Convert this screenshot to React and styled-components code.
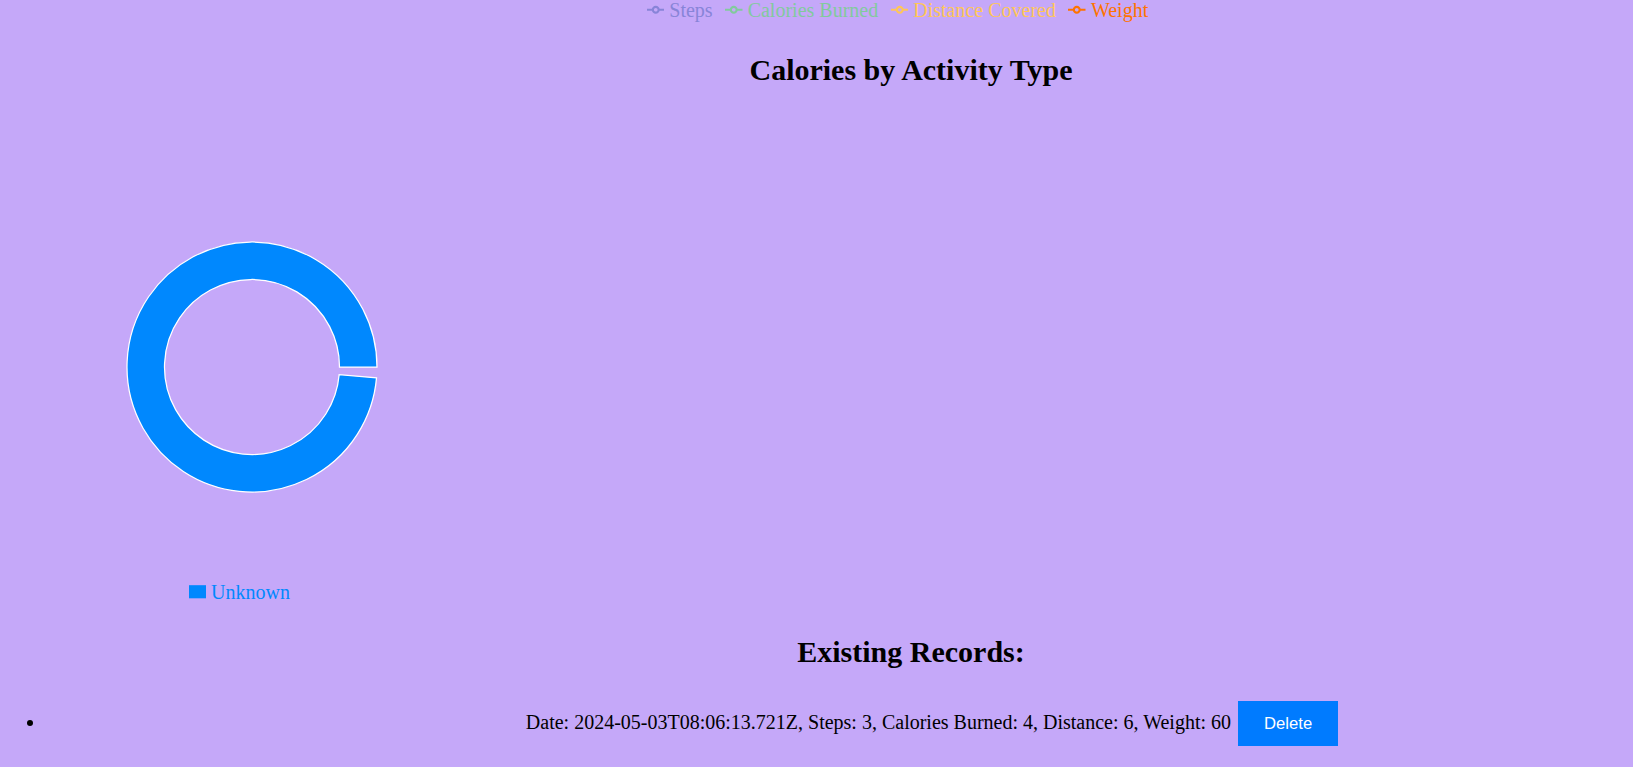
import React from "react";
import styled, { createGlobalStyle } from "styled-components";

const GlobalStyle = createGlobalStyle`
  html {
    overflow: hidden;
  }
  body {
    margin: 0 10px;
    background: #c5a8f9;
    font-family: "Liberation Serif", "Times New Roman", serif;
    color: #000;
  }
`;

const Page = styled.div`
  width: 1802px;
  text-align: center;
`;

const LegendList = styled.ul`
  display: flex;
  justify-content: center;
  margin: 0;
  padding: 0 ${(p) => p.$shift || 0}px 0 0;
  list-style: none;
  font-size: 20px;
  line-height: 20px;
`;

const LegendItem = styled.li`
  display: flex;
  align-items: center;
  margin-right: 12.5px;
  color: ${(p) => p.$color};
`;

const LegendIcon = styled.svg`
  width: 17.5px;
  height: 17.5px;
  margin-right: 5px;
  flex: none;
`;

const Heading = styled.h2`
  margin: ${(p) => p.$top}px 0 0;
  font-size: 30px;
  line-height: 34px;
  font-weight: bold;
`;

const ChartBox = styled.div`
  width: 484px;
  display: flex;
  flex-direction: column;
  align-items: center;
`;

const PieSvg = styled.svg`
  display: block;
  width: 484px;
  height: 480px;
`;

const PieLegend = styled(LegendList)`
  margin-top: 15px;
  padding-right: 13px;
`;

const RecordList = styled.ul`
  margin: 32px -6px 0 0;
  padding-left: 36px;
  font-size: 20px;
`;

const Record = styled.li`
  list-style: disc;
`;

const DeleteButton = styled.button`
  height: 45px;
  margin-left: 2px;
  padding: 0 26px;
  border: none;
  background: #007bff;
  color: #fff;
  font-family: "Liberation Sans", Arial, sans-serif;
  font-size: 16.67px;
  line-height: 45px;
  vertical-align: baseline;
  cursor: pointer;
`;

const lineSeries = [
  { name: "Steps", color: "#8884d8" },
  { name: "Calories Burned", color: "#82ca9d" },
  { name: "Distance Covered", color: "#ffc658" },
  { name: "Weight", color: "#ff7300" },
];

function LineIcon({ color }) {
  return (
    <LegendIcon viewBox="0 0 32 32">
      <path
        strokeWidth="4"
        fill="none"
        stroke={color}
        d="M0,16h10.67A5.33,5.33,0,1,1,21.33,16H32M21.33,16A5.33,5.33,0,1,1,10.67,16"
      />
    </LegendIcon>
  );
}

function donutPath(cx, cy, outer, inner, start, end) {
  const rad = (a) => (a * Math.PI) / 180;
  const pt = (r, a) => [cx + r * Math.cos(rad(a)), cy - r * Math.sin(rad(a))];
  const [x1, y1] = pt(outer, start);
  const [x2, y2] = pt(outer, end);
  const [x3, y3] = pt(inner, end);
  const [x4, y4] = pt(inner, start);
  const large = end - start > 180 ? 1 : 0;
  return `M${x1},${y1} A${outer},${outer},0,${large},0,${x2},${y2} L${x3},${y3} A${inner},${inner},0,${large},1,${x4},${y4} Z`;
}

const records = [
  {
    date: "2024-05-03T08:06:13.721Z",
    steps: 3,
    calories: 4,
    distance: 6,
    weight: 60,
  },
];

export default function App() {
  return (
    <>
      <GlobalStyle />
      <Page>
        <LegendList $shift={14.5}>
          {lineSeries.map((s) => (
            <LegendItem key={s.name} $color={s.color}>
              <LineIcon color={s.color} />
              {s.name}
            </LegendItem>
          ))}
        </LegendList>

        <Heading $top={33}>Calories by Activity Type</Heading>

        <ChartBox>
          <PieSvg viewBox="0 0 484 480">
            <path
              d={donutPath(242, 280, 125, 87.5, 0, 355)}
              fill="#0088FE"
              stroke="#fff"
              strokeWidth="1.25"
            />
          </PieSvg>
          <PieLegend>
            <LegendItem $color="#0088FE">
              <LegendIcon viewBox="0 0 32 32">
                <path fill="#0088FE" d="M0,4h32v24h-32z" />
              </LegendIcon>
              Unknown
            </LegendItem>
          </PieLegend>
        </ChartBox>

        <Heading $top={33}>Existing Records:</Heading>

        <RecordList>
          {records.map((r) => (
            <Record key={r.date}>
              Date: {r.date}, Steps: {r.steps}, Calories Burned: {r.calories},
              Distance: {r.distance}, Weight: {r.weight}{" "}
              <DeleteButton>Delete</DeleteButton>
            </Record>
          ))}
        </RecordList>
      </Page>
    </>
  );
}
